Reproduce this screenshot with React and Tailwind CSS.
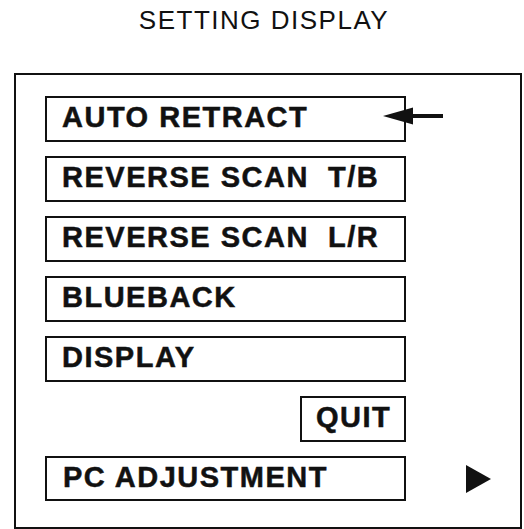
export default function App() {
  const items = [
    "AUTO RETRACT",
    "REVERSE SCAN\u00A0\u00A0T/B",
    "REVERSE SCAN\u00A0\u00A0L/R",
    "BLUEBACK",
    "DISPLAY",
  ];

  return (
    <div
      className="w-[524px] h-[529px] bg-white text-[#111] overflow-hidden"
      style={{ fontFamily: '"Liberation Sans", Arial, sans-serif' }}
    >
      <h1 className="pt-[7px] pl-[4px] text-center text-[26px] leading-none font-normal tracking-[1.5px]">
        SETTING DISPLAY
      </h1>

      <div className="mt-[40px] ml-[14px] w-[508px] h-[456px] border-2 border-[#111] pt-[21px] pl-[29px]">
        <div className="flex flex-col gap-[14px]">
          {items.map((label, i) => (
            <div
              key={label}
              className="relative w-[361px] h-[46px] border-2 border-[#111] flex items-center pl-[15px] pb-[3px]"
            >
              <span className="text-[29px] leading-none font-bold tracking-[1.5px] [-webkit-text-stroke:0.5px_#111]">
                {label}
              </span>
              {i === 0 && (
                <svg
                  className="absolute left-[336px] top-[8px]"
                  width="62"
                  height="20"
                  viewBox="0 0 62 20"
                >
                  <path d="M0 10 L30 1.5 L30 18.5 Z" fill="#111" />
                  <rect x="28" y="8" width="32" height="4" fill="#111" />
                </svg>
              )}
            </div>
          ))}

          <div className="w-[361px] flex justify-end">
            <div className="w-[106px] h-[46px] border-2 border-[#111] flex items-center pl-[14px] pb-[3px]">
              <span className="text-[29px] leading-none font-bold tracking-[1.5px] [-webkit-text-stroke:0.5px_#111]">
                QUIT
              </span>
            </div>
          </div>

          <div className="flex items-center">
            <div className="w-[361px] h-[45px] border-2 border-[#111] flex items-center pl-[16px] pb-[3px]">
              <span className="text-[29px] leading-none font-bold tracking-[1.5px] [-webkit-text-stroke:0.5px_#111]">
                PC ADJUSTMENT
              </span>
            </div>
            <svg className="ml-[60px]" width="25" height="28" viewBox="0 0 25 28">
              <path d="M0 0 L25 14 L0 28 Z" fill="#111" />
            </svg>
          </div>
        </div>
      </div>
    </div>
  );
}
